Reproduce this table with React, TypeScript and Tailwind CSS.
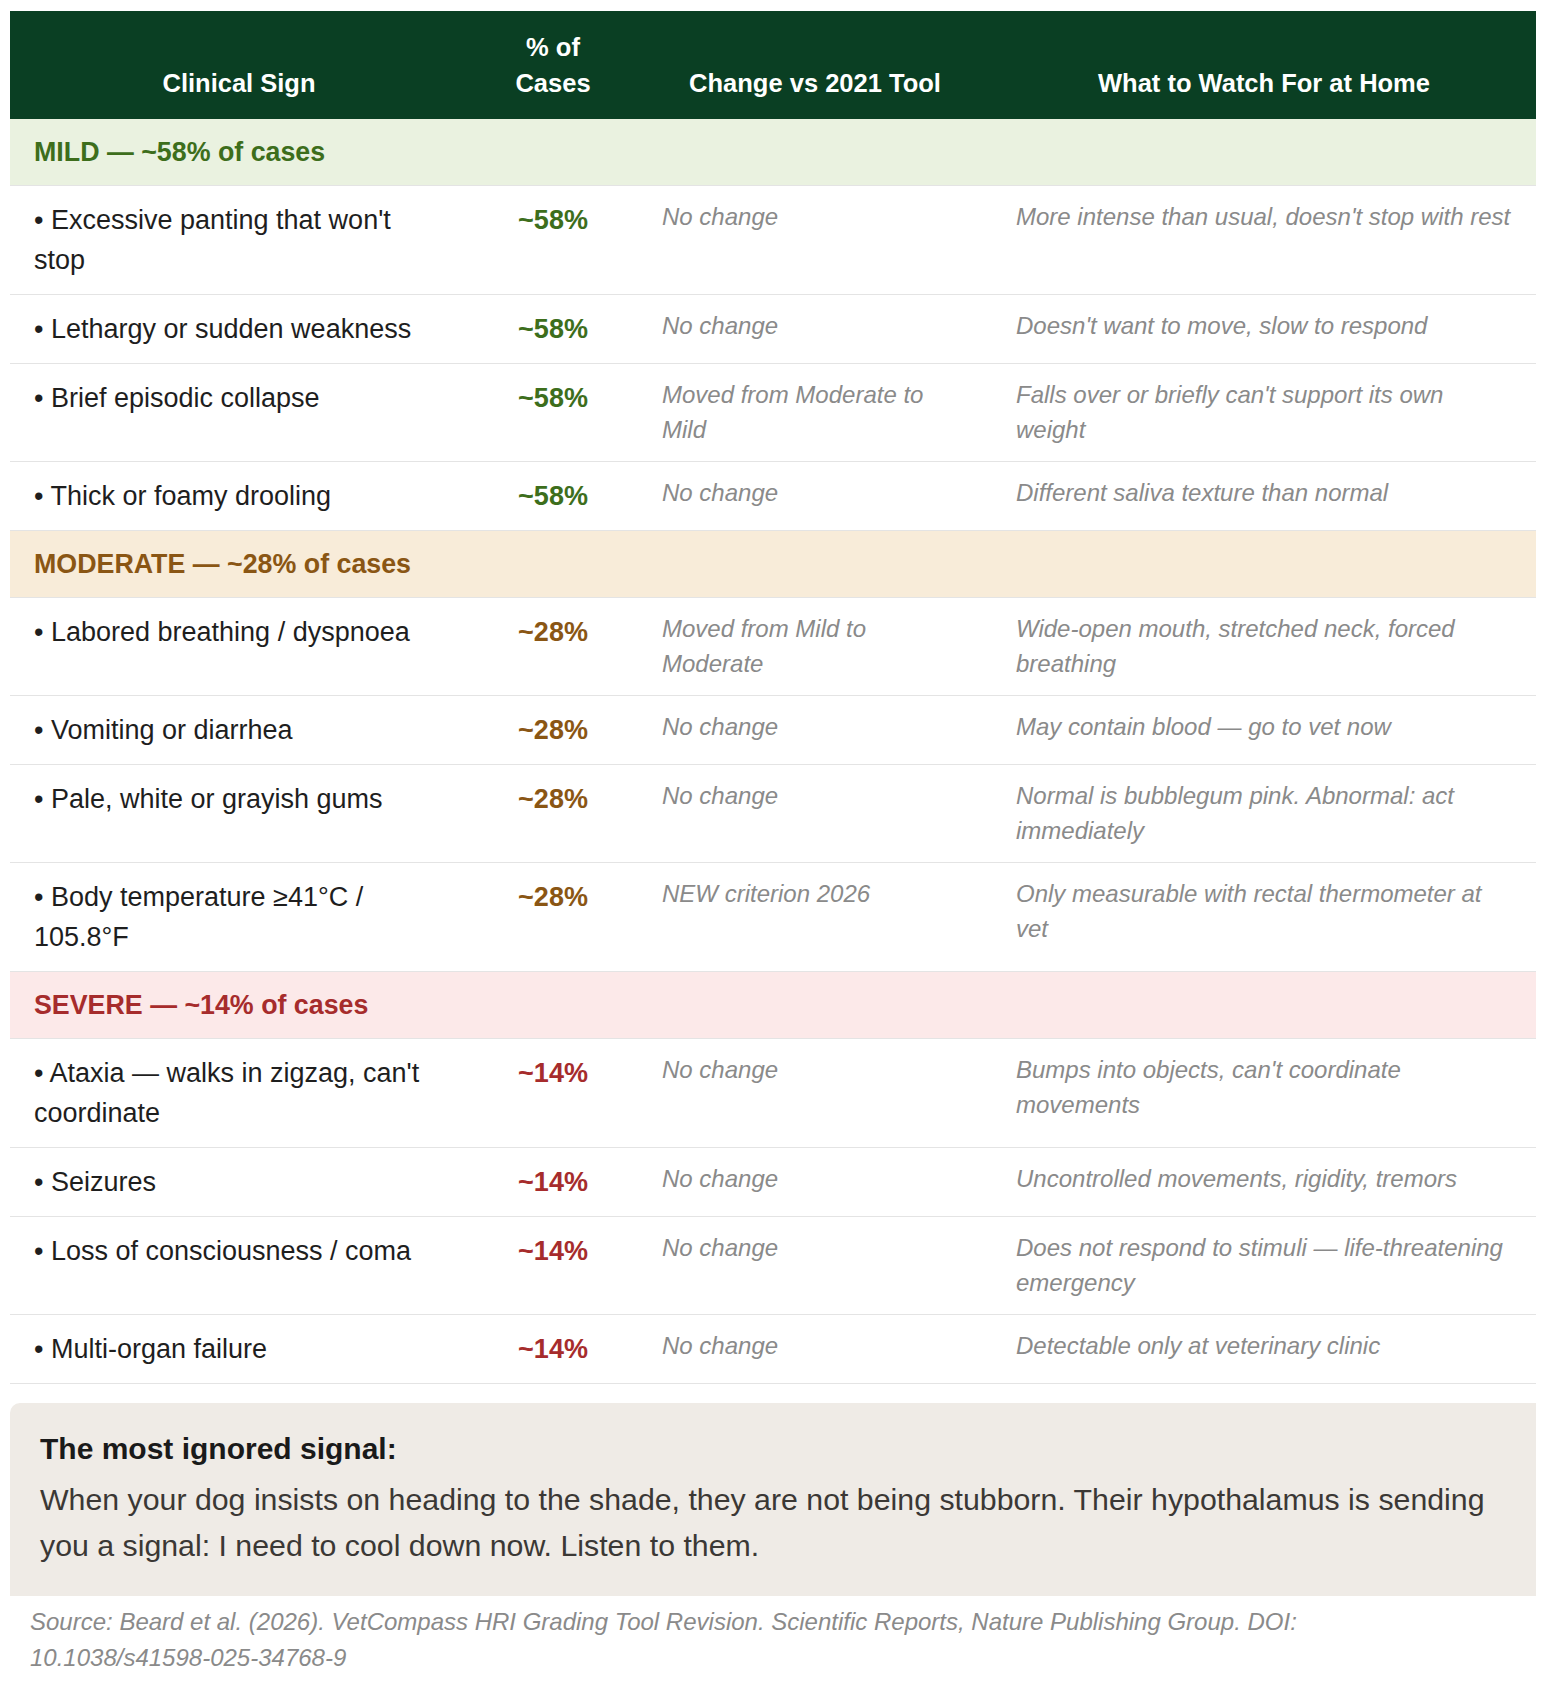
import React from "react";

type Row = [string, string, string, string];

type Section = {
  label: string;
  bg: string;
  text: string;
  rows: Row[];
};

const sections: Section[] = [
  {
    label: "MILD — ~58% of cases",
    bg: "bg-[#eaf2e0]",
    text: "text-[#3d6e1c]",
    rows: [
      ["• Excessive panting that won't stop", "~58%", "No change", "More intense than usual, doesn't stop with rest"],
      ["• Lethargy or sudden weakness", "~58%", "No change", "Doesn't want to move, slow to respond"],
      ["• Brief episodic collapse", "~58%", "Moved from Moderate to Mild", "Falls over or briefly can't support its own weight"],
      ["• Thick or foamy drooling", "~58%", "No change", "Different saliva texture than normal"],
    ],
  },
  {
    label: "MODERATE — ~28% of cases",
    bg: "bg-[#f8ecd9]",
    text: "text-[#8a5614]",
    rows: [
      ["• Labored breathing / dyspnoea", "~28%", "Moved from Mild to Moderate", "Wide-open mouth, stretched neck, forced breathing"],
      ["• Vomiting or diarrhea", "~28%", "No change", "May contain blood — go to vet now"],
      ["• Pale, white or grayish gums", "~28%", "No change", "Normal is bubblegum pink. Abnormal: act immediately"],
      ["• Body temperature ≥41°C / 105.8°F", "~28%", "NEW criterion 2026", "Only measurable with rectal thermometer at vet"],
    ],
  },
  {
    label: "SEVERE — ~14% of cases",
    bg: "bg-[#fce9e9]",
    text: "text-[#a62c2c]",
    rows: [
      ["• Ataxia — walks in zigzag, can't coordinate", "~14%", "No change", "Bumps into objects, can't coordinate movements"],
      ["• Seizures", "~14%", "No change", "Uncontrolled movements, rigidity, tremors"],
      ["• Loss of consciousness / coma", "~14%", "No change", "Does not respond to stimuli — life-threatening emergency"],
      ["• Multi-organ failure", "~14%", "No change", "Detectable only at veterinary clinic"],
    ],
  },
];

export default function App() {
  return (
    <div
      className="min-h-[1692px] w-[1546px] bg-white px-[10px] pt-[11px] text-[#222222]"
      style={{ fontFamily: '"Liberation Sans", Arial, Helvetica, sans-serif' }}
    >
      <table className="w-full table-fixed border-collapse">
        <colgroup>
          <col className="w-[458px]" />
          <col className="w-[170px]" />
          <col className="w-[354px]" />
          <col className="w-[544px]" />
        </colgroup>
        <thead>
          <tr className="bg-[#0a3f23] text-white">
            {["Clinical Sign", "% of Cases", "Change vs 2021 Tool", "What to Watch For at Home"].map((h) => (
              <th
                key={h}
                className="px-6 py-[18px] text-center align-bottom text-[25.5px] font-bold leading-[36px]"
              >
                {h}
              </th>
            ))}
          </tr>
        </thead>
        <tbody>
          {sections.map((s) => (
            <React.Fragment key={s.label}>
              <tr className={`${s.bg} border-b border-[#e4e4e4]`}>
                <td
                  colSpan={4}
                  className={`px-6 pt-[13px] pb-[13px] text-[26.8px] font-bold leading-[40px] ${s.text}`}
                >
                  {s.label}
                </td>
              </tr>
              {s.rows.map((r) => (
                <tr key={r[0]} className="border-b border-[#e4e4e4]">
                  <td className="px-6 py-[14px] align-top text-[27px] leading-[40px] text-[#1e1e1e]">
                    {r[0]}
                  </td>
                  <td
                    className={`px-6 py-[14px] text-center align-top text-[27px] font-bold leading-[40px] ${s.text}`}
                  >
                    {r[1]}
                  </td>
                  <td className="px-6 py-[14px] align-top text-[24px] italic leading-[34.5px] text-[#8a8a8a]">
                    {r[2]}
                  </td>
                  <td className="px-6 py-[14px] align-top text-[24px] italic leading-[34.5px] text-[#8a8a8a]">
                    {r[3]}
                  </td>
                </tr>
              ))}
            </React.Fragment>
          ))}
        </tbody>
      </table>

      <div className="mt-[19px] rounded-tl-[10px] bg-[#efebe6] px-[30px] pt-[28px] pb-[27px]">
        <div className="text-[30px] font-bold leading-[36px] text-[#1a1a1a]">The most ignored signal:</div>
        <p className="mt-[10px] text-[30.3px] leading-[46px] text-[#3b3835]">
          When your dog insists on heading to the shade, they are not being stubborn. Their hypothalamus is sending
          you a signal: I need to cool down now. Listen to them.
        </p>
      </div>

      <p className="mt-[8px] px-[20px] text-[24px] italic leading-[36px] text-[#8a8a8a]">
        Source: Beard et al. (2026). VetCompass HRI Grading Tool Revision. Scientific Reports, Nature Publishing Group.
        DOI: <span className="whitespace-nowrap">10.1038/s41598-025-34768-9</span>
      </p>
    </div>
  );
}
